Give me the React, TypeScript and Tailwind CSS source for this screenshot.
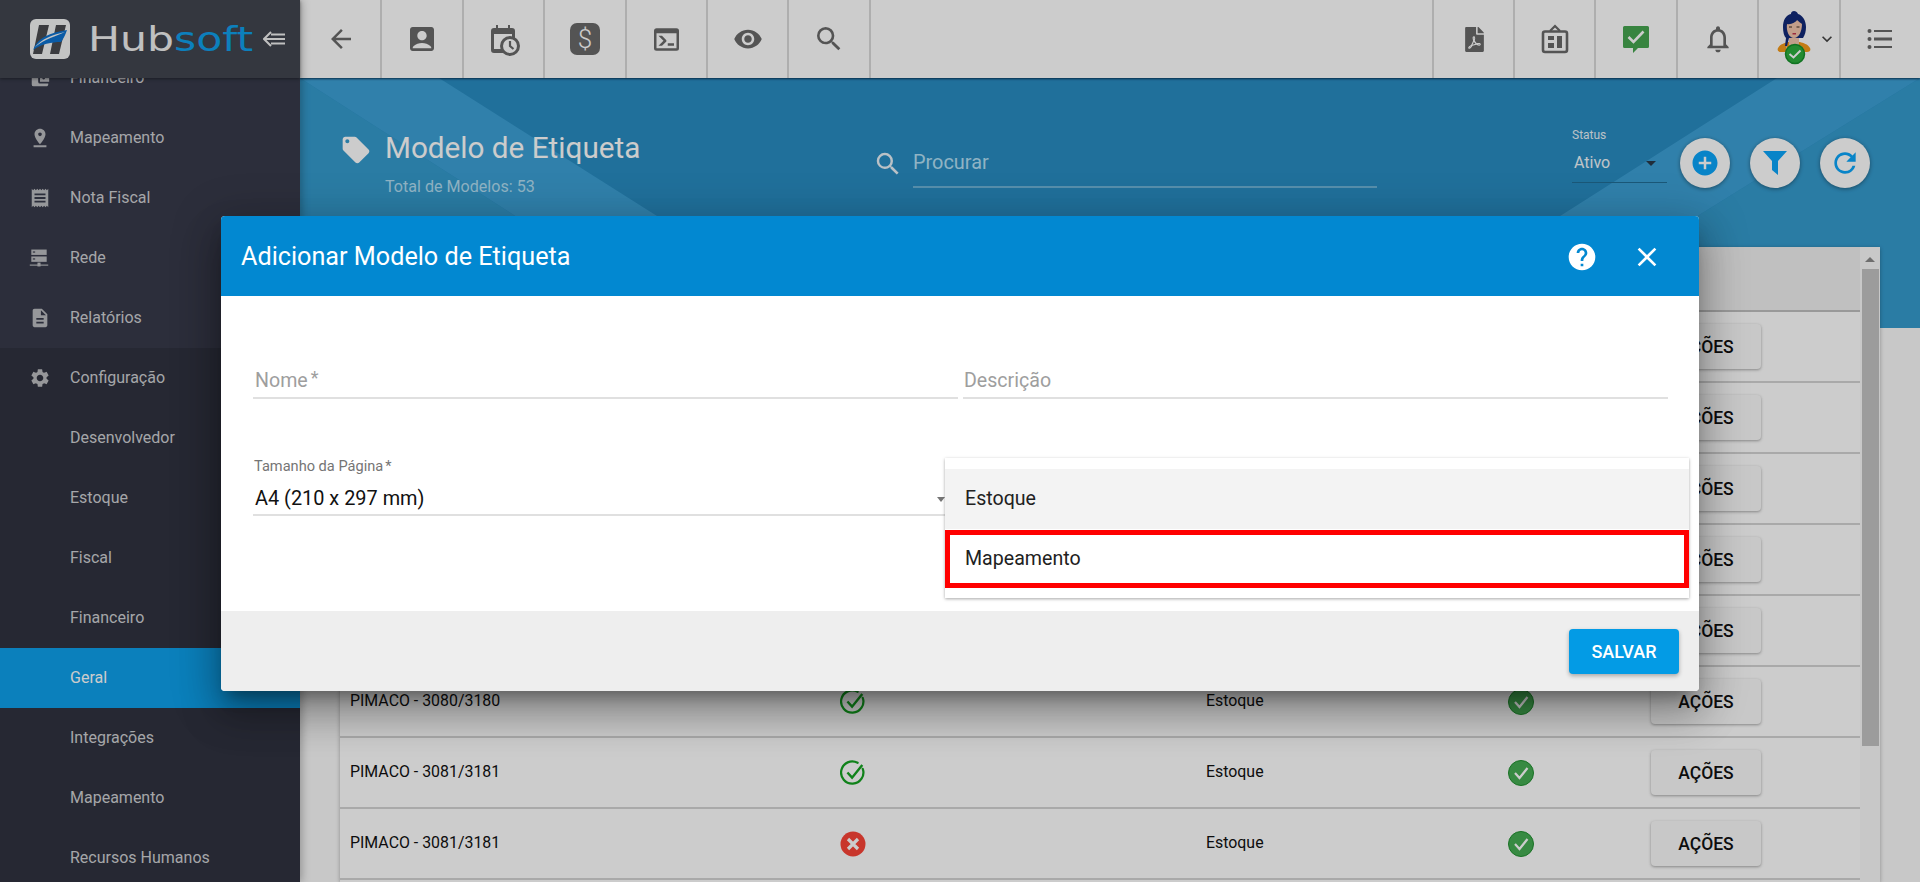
import React from "react";
import { FaFilePdf } from "react-icons/fa";
import {
  MdArrowBack, MdAccountBox, MdVisibility, MdSearch, MdNotificationsNone, MdKeyboardArrowDown,
  MdPinDrop, MdReceipt, MdDescription, MdSettings, MdLocalOffer, MdAddCircle, MdRefresh, MdHelp, MdClose, MdAccountBalanceWallet,
} from "react-icons/md";

const Cell = ({ children, left = false }: { children: React.ReactNode; left?: boolean }) => (
  <div className={`flex h-full w-[81.4px] shrink-0 items-center justify-center border-[#dadada] ${left ? "border-l-2" : "border-r-2"}`}>{children}</div>
);

const CalendarClock = () => (
  <svg width="36" height="36" viewBox="0 0 36 36">
    <path d="M11 4h2v3h10V4h2v3h2a3 3 0 0 1 3 3v12h-4v10H9a3 3 0 0 1-3-3V10a3 3 0 0 1 3-3h2z" fill="#6a6a6a" />
    <rect x="9" y="13" width="18" height="15" fill="#ffffff" />
    <circle cx="25" cy="25" r="8.5" fill="#ffffff" stroke="#6a6a6a" strokeWidth="3" />
    <path d="M25 20v5l3.5 3" fill="none" stroke="#6a6a6a" strokeWidth="2.2" />
  </svg>
);

const DollarBox = () => (
  <div className="flex h-[32px] w-[30px] items-center justify-center rounded-[7px] bg-[#6a6a6a] text-[26px] font-light leading-none text-white">$</div>
);

const Terminal = () => (
  <svg width="30" height="30" viewBox="2 3 20 18" className="h-[25px] w-[25px]">
    <path fill="#6a6a6a" d="M20,19V7H4V19H20M20,3A2,2 0 0,1 22,5V19A2,2 0 0,1 20,21H4A2,2 0 0,1 2,19V5C2,3.89 2.9,3 4,3H20M13,17V15H18V17H13M9.58,13L5.57,9H8.4L11.7,12.3C12.09,12.69 12.09,13.33 11.7,13.72L8.42,17H5.59L9.58,13Z" />
  </svg>
);

const BoardIcon = () => (
  <svg width="28" height="30" viewBox="0 0 28 30">
    <path d="M9 7l5-5 5 5" fill="none" stroke="#6a6a6a" strokeWidth="2.2" />
    <rect x="2" y="7.5" width="24" height="20.5" rx="2" fill="none" stroke="#6a6a6a" strokeWidth="2.6" />
    <rect x="7" y="12" width="6" height="4" fill="#6a6a6a" />
    <rect x="7" y="19" width="6" height="5" fill="#6a6a6a" />
    <rect x="16" y="12" width="5" height="12" fill="#6a6a6a" />
  </svg>
);

const MessageCheck = () => (
  <svg width="28" height="28" viewBox="0 0 28 28">
    <path d="M1 2.5A1.5 1.5 0 0 1 2.5 1h23A1.5 1.5 0 0 1 27 2.5v19a1.5 1.5 0 0 1-1.5 1.5H16l-5 5v-5H2.5A1.5 1.5 0 0 1 1 21.500z" fill="#46a650" />
    <path d="M6.500 12l5 5L21.500 6.500" fill="none" stroke="#ffffff" strokeWidth="2.6" />
  </svg>
);

const ListIcon = () => (
  <svg width="26" height="22" viewBox="0 0 26 22">
    <circle cx="2.500" cy="3" r="2" fill="#6a6a6a" /><circle cx="2.500" cy="11" r="2" fill="#6a6a6a" /><circle cx="2.500" cy="19" r="2" fill="#6a6a6a" />
    <rect x="7" y="2" width="18" height="2" fill="#6a6a6a" /><rect x="7" y="9.500" width="18" height="3" fill="#6a6a6a" /><rect x="7" y="18" width="18" height="2" fill="#6a6a6a" />
  </svg>
);

const Avatar = () => (
  <svg width="40" height="56" viewBox="0 0 40 56">
    <path d="M4 37c2-4 7-5 10-6h12c3 1 8 2 10 6 1 2 0 4-3 4H7c-3 0-4-2-3-4z" fill="#f59a1a" />
    <rect x="15" y="24" width="10" height="10" fill="#f3c6ad" />
    <path d="M12 35c3 3 13 3 16 0l-2 12H14z" fill="#f3c6ad" />
    <path d="M20 0c-3 0-3 3-3 3-5 1-8 6-8 13 0 5 1 9 3 11l-1 8h2l2-8h14c2-3 3-7 3-11 0-7-4-12-8-13 0 0-1-3-4-3z" fill="#122a78" />
    <path d="M13 13c4 1 9-2 10-4 2 2 4 3 5 4 0 7-3 14-8 14s-8-7-7-14z" fill="#f3c6ad" />
    <rect x="15" y="15.500" width="3" height="1" fill="#3c2a20" /><rect x="22.500" y="15.500" width="3" height="1" fill="#3c2a20" />
    <rect x="18.500" y="22" width="3.500" height="1.500" fill="#c4344d" />
    <circle cx="21" cy="43" r="9.500" fill="#2cae3c" stroke="#15902a" strokeWidth="1.500" />
    <path d="M15.500 43l4 3.500 7-7" fill="none" stroke="#ffffff" strokeWidth="2" />
  </svg>
);

const ServerIcon = () => (
  <svg width="20" height="20" viewBox="0 0 26 24">
    <rect x="3" y="1" width="20" height="7" fill="currentColor" />
    <rect x="3" y="10" width="20" height="7" fill="currentColor" />
    <rect x="1" y="20.500" width="24" height="1.500" fill="currentColor" />
    <rect x="11" y="18" width="4" height="5" fill="currentColor" />
    <rect x="5" y="3.500" width="3" height="1.500" fill="#373a4a" /><rect x="5" y="12.500" width="3" height="1.500" fill="#373a4a" />
  </svg>
);

const navTop = [
  { label: "Financeiro", icon: <MdAccountBalanceWallet size={22} /> },
  { label: "Mapeamento", icon: <MdPinDrop size={22} /> },
  { label: "Nota Fiscal", icon: <MdReceipt size={22} /> },
  { label: "Rede", icon: <ServerIcon /> },
  { label: "Relatórios", icon: <MdDescription size={22} /> },
];
const navSub = ["Desenvolvedor", "Estoque", "Fiscal", "Financeiro", "Geral", "Integrações", "Mapeamento", "Recursos Humanos"];

const NavRow = ({ label, icon, active = false }: { label: string; icon?: React.ReactNode; active?: boolean }) => (
  <div className={`flex h-[60px] shrink-0 items-center text-[16px] ${active ? "bg-[#0ea0ec] text-white" : "text-[#cfd0d4]"}`}>
    <div className="flex w-[70px] shrink-0 justify-start pl-[29px] text-[#bcbdc1]">{icon}</div>
    <span className="whitespace-nowrap">{label}</span>
  </div>
);

const Check = () => (
  <svg width="28" height="28" viewBox="0 0 28 28">
    <path d="M24.500 9.500A12 12 0 1 1 19 3" fill="none" stroke="#15a321" strokeWidth="2.400" strokeLinecap="round" />
    <path d="M8 13.500l5 5.500L24 5.500" fill="none" stroke="#15a321" strokeWidth="2.600" />
  </svg>
);
const Cross = () => (
  <svg width="26" height="26" viewBox="0 0 26 26">
    <circle cx="13" cy="13" r="12.500" fill="#fb4437" />
    <path d="M8 8l10 10M18 8L8 18" stroke="#ffffff" strokeWidth="3.200" />
  </svg>
);
const GreenCheck = () => (
  <svg width="26" height="26" viewBox="0 0 26 26">
    <circle cx="13" cy="13" r="12.500" fill="#45ad53" stroke="#1f8f2e" strokeWidth="1" />
    <path d="M7 13l4.500 5L19.500 8" fill="none" stroke="#ffffff" strokeWidth="2.200" />
  </svg>
);

const rows = [
  { name: "", ok: true },
  { name: "", ok: true },
  { name: "", ok: true },
  { name: "", ok: true },
  { name: "", ok: true },
  { name: "PIMACO - 3080/3180", ok: true },
  { name: "PIMACO - 3081/3181", ok: true },
  { name: "PIMACO - 3081/3181", ok: false },
];

export default function App() {
  return (
    <div className="relative flex h-[882px] w-[1920px] overflow-hidden bg-[#fafafa] font-['Roboto',sans-serif]">
      <aside className="relative z-20 flex w-[300px] shrink-0 flex-col bg-[#373a4a] shadow-[2px_0_8px_rgba(0,0,0,0.25)]">
        <div className="relative z-10 flex h-[78px] shrink-0 items-center bg-[#41454f] pl-[30px] shadow-[0_1px_3px_rgba(0,0,0,0.4)]">
          <svg width="40" height="40" viewBox="0 0 40 40" className="shrink-0">
            <rect width="40" height="40" rx="6" fill="#f4f5f6" />
            <path d="M9 6h10l-7 29H3zM26 6h10l-7 29H20z" fill="#4a4c50" />
            <path d="M3 31C8 18 20 14 37 11c-2 6-4 9-6 12-9 0-20 2-28 8z" fill="#0d72d0" />
            <path d="M5 28c7-8 16-12 30-15-9 4-20 7-30 15z" fill="#f4f5f6" />
          </svg>
          <div className="ml-[18px] w-[128px] shrink-0 origin-left scale-x-[1.29] whitespace-nowrap font-['DejaVu_Sans',sans-serif] text-[33px] leading-none">
            <span className="text-[#f0f0f1]">Hub</span><span className="text-[#10a0ec]">soft</span>
          </div>
          <svg width="22" height="16" viewBox="0 0 22 16" className="ml-[47px] shrink-0">
            <path d="M8 1L1 8l7 7" fill="none" stroke="#f0f0f0" strokeWidth="2" />
            <path d="M2 8h20M8 3.500h14M8 12.500h14" stroke="#f0f0f0" strokeWidth="2" />
          </svg>
        </div>
        <nav className="-mt-[30px] flex flex-col">
          {navTop.map((n) => <NavRow key={n.label} label={n.label} icon={n.icon} />)}
          <div className="flex flex-col bg-[#303340]">
            <NavRow label="Configuração" icon={<MdSettings size={22} />} />
            {navSub.map((s, i) => <NavRow key={i} label={s} active={s === "Geral"} />)}
          </div>
        </nav>
      </aside>

      <main className="flex min-w-0 flex-1 flex-col">
        <header className="relative z-10 flex h-[78px] shrink-0 items-center justify-between bg-white shadow-[0_1px_2px_rgba(0,30,60,0.8)]">
          <div className="ml-[1px] flex h-full">
            <Cell><MdArrowBack size={30} color="#6a6a6a" /></Cell>
            <Cell><MdAccountBox size={32} color="#6a6a6a" /></Cell>
            <Cell><CalendarClock /></Cell>
            <Cell><DollarBox /></Cell>
            <Cell><Terminal /></Cell>
            <Cell><MdVisibility size={30} color="#6a6a6a" /></Cell>
            <Cell><MdSearch size={32} color="#6a6a6a" /></Cell>
          </div>
          <div className="flex h-full">
            <Cell left><div className="pl-[3px]"><FaFilePdf size={25} color="#6a6a6a" /></div></Cell>
            <Cell left><BoardIcon /></Cell>
            <Cell left><MessageCheck /></Cell>
            <Cell left><MdNotificationsNone size={32} color="#6a6a6a" /></Cell>
            <Cell left>
              <div className="flex items-center pl-[14px]">
                <Avatar />
                <MdKeyboardArrowDown size={20} color="#444444" className="ml-[3px]" />
              </div>
            </Cell>
            <Cell left><ListIcon /></Cell>
          </div>
        </header>

        <section className="relative flex h-[250px] shrink-0 items-start bg-[#298cc2]">
          <svg className="absolute inset-0 h-full w-full" viewBox="0 0 1620 250" preserveAspectRatio="none">
            <polygon points="0,0 390,250 0,250" fill="#359bce" />
            <polygon points="0,0 139,0 534,250 390,250" fill="#3da1d6" />
            <polygon points="1620,0 1217,250 1620,250" fill="#359bce" />
            <polygon points="1477,0 1620,0 1217,250 1084,250" fill="#3da1d6" />
          </svg>
          <div className="relative flex w-full">
            <div className="ml-[40px] mt-[55px] flex w-[533px] shrink-0">
              <MdLocalOffer size={32} color="#ffffff" className="mt-[1px] shrink-0" />
              <div className="ml-[13px]">
                <h1 className="whitespace-nowrap text-[29.700px] font-normal leading-[30px] text-white">Modelo de Etiqueta</h1>
                <p className="mt-[14px] text-[16.100px] leading-[20px] text-[#b4e0f5]">Total de Modelos: 53</p>
              </div>
            </div>
            <div className="mt-[70px] flex w-[504px] shrink-0 items-start">
              <MdSearch size={30} color="#e9f2f8" className="mt-[1px] shrink-0" />
              <div className="ml-[10px] h-[40px] flex-1 border-b-2 border-[#6db3d8] pt-[2px] text-[19.900px] leading-[26px] text-[#b4e0f5]">Procurar</div>
            </div>
            <div className="ml-[195px] mt-[49px] w-[95px] shrink-0">
              <div className="text-[12px] leading-[16px] text-[#e8f3f9]">Status</div>
              <div className="mt-[6px] flex h-[34px] items-start justify-between border-b border-[#226e96] pl-[2px] pr-[11px] text-[16px] leading-[28px] text-[#f0f7fb]">
                <span>Ativo</span>
                <span className="mt-[12px] h-0 w-0 border-x-[5px] border-t-[5px] border-x-transparent border-t-[#283a4a]" />
              </div>
            </div>
            <div className="ml-[13px] mt-[60px] flex gap-[20px]">
              <div className="flex h-[50px] w-[50px] items-center justify-center rounded-full bg-white shadow-[0_1px_4px_rgba(0,0,0,0.4)]"><MdAddCircle size={30} color="#0aa5fa" /></div>
              <div className="flex h-[50px] w-[50px] items-center justify-center rounded-full bg-white shadow-[0_1px_4px_rgba(0,0,0,0.4)]">
                <svg width="26" height="26" viewBox="0 0 26 26"><path d="M1 1h24l-9 10v14l-6-5V11z" fill="#0aa5fa" /></svg>
              </div>
              <div className="flex h-[50px] w-[50px] items-center justify-center rounded-full bg-white shadow-[0_1px_4px_rgba(0,0,0,0.4)]"><MdRefresh size={32} color="#0aa5fa" /></div>
            </div>
          </div>
        </section>

        <section className="relative mx-[40px] -mt-[81px] flex min-h-0 flex-1 bg-white shadow-[0_1px_4px_rgba(0,0,0,0.3)]">
          <div className="min-w-0 flex-1">
            <div className="h-[65px] border-b-2 border-[#c0c0c0] bg-[#f0f0f0]" />
            {rows.map((r, i) => (
              <div key={i} className="grid h-[71px] grid-cols-[500px_26px_340px_302px_26px_117px_110px] items-center border-b-2 border-[#d4d4d4] text-[15.900px] text-[#111111]">
                <div className="pb-[1px] pl-[10px]">{r.name}</div>
                <div className="flex justify-center pt-[1px]">{r.name ? (r.ok ? <Check /> : <Cross />) : null}</div>
                <div />
                <div className="pb-[1px]">{r.name ? "Estoque" : ""}</div>
                {r.name ? <GreenCheck /> : <div />}
                <div />
                <button className="flex h-[45px] items-center justify-center rounded-[4px] bg-[#fafafa] pt-[2px] text-[17.500px] font-medium text-[#111111] shadow-[0_1px_3px_rgba(0,0,0,0.35)]">AÇÕES</button>
              </div>
            ))}
          </div>
          <div className="flex w-[20px] shrink-0 flex-col items-center bg-[#fafafa] pt-[10px]">
            <span className="h-0 w-0 border-x-[5px] border-b-[5px] border-x-transparent border-b-[#8a8a8a]" />
            <div className="mt-[7px] h-[477px] w-[17px] bg-[#c4c4c4]" />
          </div>
        </section>
      </main>

      <div className="absolute inset-0 z-30 bg-black/20" />

      <div className="absolute left-[221px] top-[216px] z-40 flex h-[475px] w-[1478px] flex-col rounded-[4px] bg-white shadow-[0_11px_15px_-7px_rgba(0,0,0,0.34),0_24px_38px_3px_rgba(0,0,0,0.22),0_9px_46px_8px_rgba(0,0,0,0.18)]">
        <div className="flex h-[80px] shrink-0 items-center justify-between rounded-t-[4px] bg-[#0288d1] pl-[20px] pr-[36px] pt-[2px] text-white">
          <h2 className="text-[25.200px] font-normal">Adicionar Modelo de Etiqueta</h2>
          <div className="flex items-center gap-[33px]">
            <MdHelp size={32} color="#ffffff" />
            <MdClose size={32} color="#ffffff" />
          </div>
        </div>
        <div className="relative flex-1 px-[32px] pt-[68px]">
          <div className="grid grid-cols-[705px_705px] gap-x-[5px]">
            <div className="flex h-[35px] items-center border-b-2 border-[#e0e0e0] pl-[2px] text-[19.600px] text-[#9e9e9e]">Nome<span className="ml-[3px] -mt-[6px] text-[18px]">*</span></div>
            <div className="flex h-[35px] items-center border-b-2 border-[#e0e0e0] pl-[1px] text-[19.600px] text-[#9e9e9e]">Descrição</div>
            <div className="mt-[58px]">
              <div className="pl-[1px] text-[14.600px] leading-[18px] text-[#757575]">Tamanho da Página<span className="ml-[2px]">*</span></div>
              <div className="flex h-[41px] items-center justify-between border-b-2 border-[#e0e0e0] pl-[2px] pr-[13px] pt-[9px] text-[19.900px] text-[#111111]">
                <span>A4 (210 x 297 mm)</span>
                <span className="h-0 w-0 border-x-[4px] border-t-[5px] border-x-transparent border-t-[#757575]" />
              </div>
            </div>
          </div>
          <div className="absolute left-[724px] top-[162px] z-10 flex h-[140px] w-[744px] flex-col justify-center bg-white text-[19.600px] text-[#212121] shadow-[0_1px_3px_rgba(0,0,0,0.35)]">
            <div className="flex h-[60px] shrink-0 items-center bg-[#f3f3f3] pl-[20px]">Estoque</div>
            <div className="mt-[1px] flex h-[58px] shrink-0 items-center border-[5px] border-[#ff0000] pl-[15px] pt-[1px]">Mapeamento</div>
          </div>
        </div>
        <div className="flex h-[80px] shrink-0 items-center justify-end rounded-b-[4px] bg-[#eeeeee] pr-[20px]">
          <button className="flex h-[45px] w-[110px] items-center justify-center rounded-[4px] bg-[#039be5] pt-[1px] text-[18px] font-medium text-white shadow-[0_2px_4px_rgba(0,0,0,0.3)]">SALVAR</button>
        </div>
      </div>
    </div>
  );
}
